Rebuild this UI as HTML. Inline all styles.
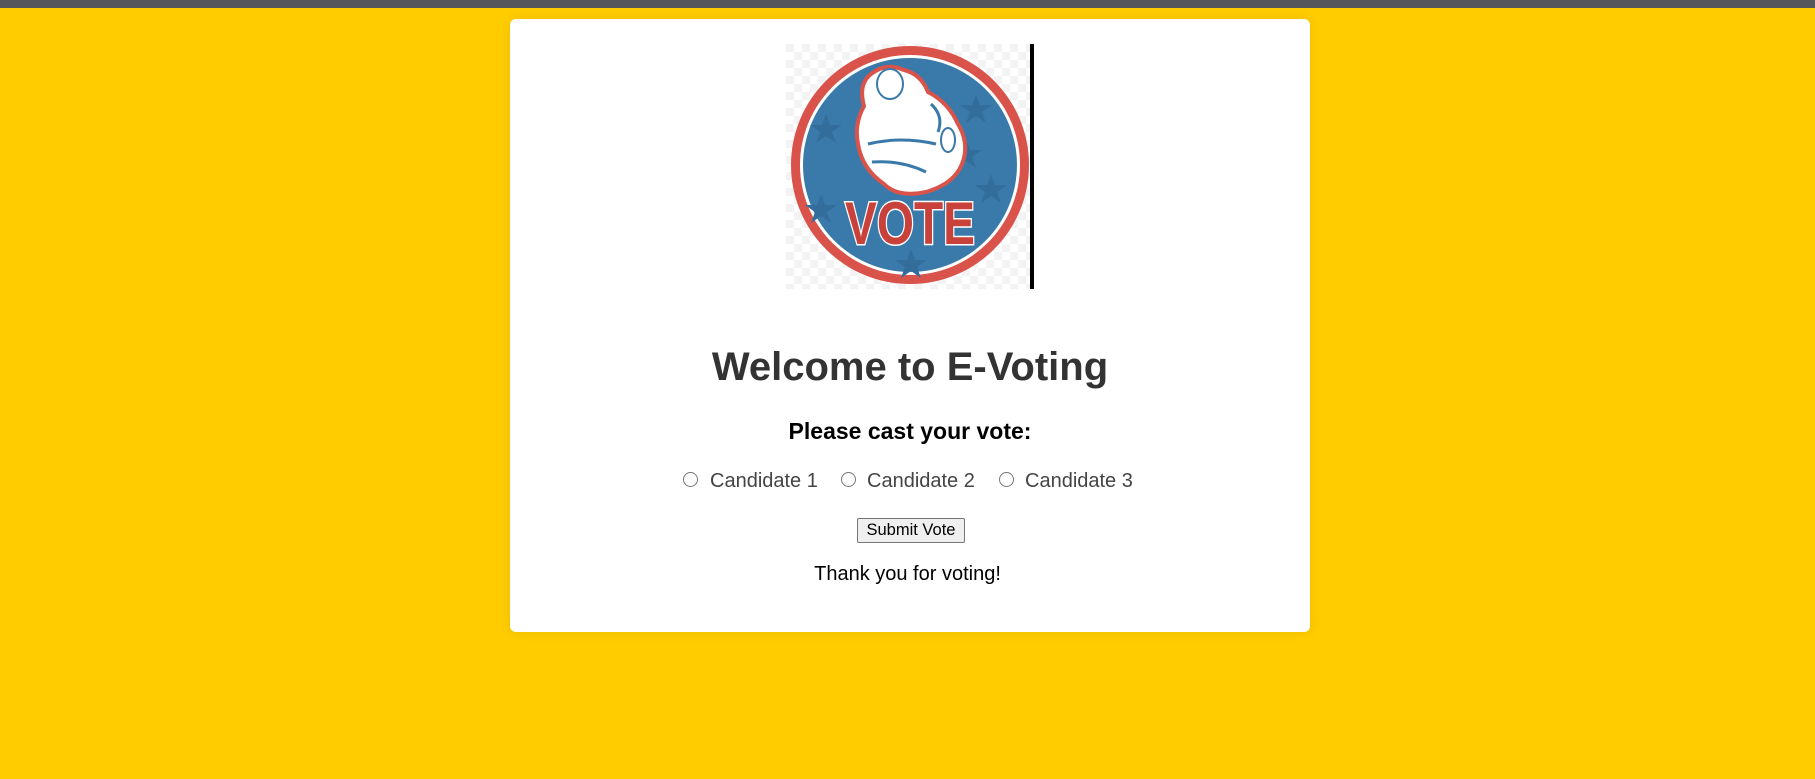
<!DOCTYPE html>
<html><head><meta charset="utf-8">
<style>
html,body{margin:0;padding:0;width:1815px;height:779px;overflow:hidden;background:#ffcc00;font-family:"Liberation Sans",Arial,sans-serif;}
.bar{position:absolute;left:0;top:0;width:1815px;height:8px;background:#56575a;}
.card{position:absolute;left:510px;top:19px;width:800px;height:613px;background:#fff;border-radius:6px;box-shadow:0 0 12px rgba(0,0,0,0.08);}
.abs{position:absolute;white-space:nowrap;}
h1{position:absolute;left:0;width:800px;top:328px;margin:0;text-align:center;font-size:40px;font-weight:bold;color:#333;line-height:1;}
h3{position:absolute;left:0;width:800px;top:401px;margin:0;text-align:center;font-size:23px;font-weight:bold;color:#000;line-height:1;}
.radio{position:absolute;width:13px;height:13px;border:1px solid #767676;border-radius:50%;background:#fff;top:472px;}
.lab{position:absolute;top:471px;font-size:20px;color:#444;line-height:1;}
.btn{position:absolute;left:857px;top:518px;width:106px;height:23px;border:1px solid #767676;border-radius:2px;background:#efefef;font-size:16.5px;line-height:23px;text-align:center;color:#000;}
.thanks{position:absolute;left:0;width:1815px;text-align:center;top:564px;font-size:20px;color:#000;line-height:1;}
</style></head><body>
<div class="bar"></div>
<div class="card">
<h1>Welcome to E-Voting</h1>
<h3>Please cast your vote:</h3>
</div>
<svg class="abs" style="left:786px;top:44px" width="248" height="245" viewBox="0 0 248 245">
<defs><pattern id="ck" width="16" height="16" patternUnits="userSpaceOnUse"><rect width="16" height="16" fill="#fff"/><rect width="8" height="8" fill="#f3f3f3"/><rect x="8" y="8" width="8" height="8" fill="#f3f3f3"/></pattern></defs>
<rect width="244" height="245" fill="url(#ck)"/>
<rect x="244" width="4" height="245" fill="#000"/>
<circle cx="124" cy="121" r="119" fill="#d9534a"/>
<circle cx="124" cy="121" r="110" fill="#fff"/>
<circle cx="124" cy="121" r="107" fill="#3a7aab"/>
<g fill="#336d9c">
<path d="M40 70l4 11h12l-10 7 4 11-10-7-10 7 4-11-10-7h12z"/>
<path d="M190 50l4 11h12l-10 7 4 11-10-7-10 7 4-11-10-7h12z"/>
<path d="M205 130l4 11h12l-10 7 4 11-10-7-10 7 4-11-10-7h12z"/>
<path d="M35 150l4 11h12l-10 7 4 11-10-7-10 7 4-11-10-7h12z"/>
<path d="M125 205l4 11h12l-10 7 4 11-10-7-10 7 4-11-10-7h12z"/>
<path d="M180 95l4 11h12l-10 7 4 11-10-7-10 7 4-11-10-7h12z"/>
</g>
<path d="M78 62 Q72 40 85 30 Q100 18 118 26 Q135 30 142 48 Q162 58 172 80 Q184 100 176 120 Q168 140 140 148 Q112 154 98 140 Q76 125 72 100 Q68 80 78 62 Z" fill="#fff" stroke="#d9534a" stroke-width="4"/>
<ellipse cx="104" cy="40" rx="13" ry="15" fill="#fff" stroke="#3a7aab" stroke-width="2"/>
<path d="M82 100 Q115 92 150 100 M86 118 Q115 116 140 128 M145 60 Q158 72 152 88" fill="none" stroke="#3a7aab" stroke-width="3"/>
<ellipse cx="162" cy="96" rx="7" ry="12" fill="#fff" stroke="#3a7aab" stroke-width="2"/>
<text x="124" y="200" text-anchor="middle" font-family="Liberation Sans,sans-serif" font-weight="bold" font-size="60" fill="#c8413a" stroke="#fff" stroke-width="3" paint-order="stroke" textLength="130" lengthAdjust="spacingAndGlyphs">VOTE</text>
</svg>
<div class="radio" style="left:683px"></div><div class="lab" style="left:710px">Candidate 1</div>
<div class="radio" style="left:841px"></div><div class="lab" style="left:867px">Candidate 2</div>
<div class="radio" style="left:999px"></div><div class="lab" style="left:1025px">Candidate 3</div>
<div class="btn">Submit Vote</div>
<div class="thanks">Thank you for voting!</div>
</body></html>
